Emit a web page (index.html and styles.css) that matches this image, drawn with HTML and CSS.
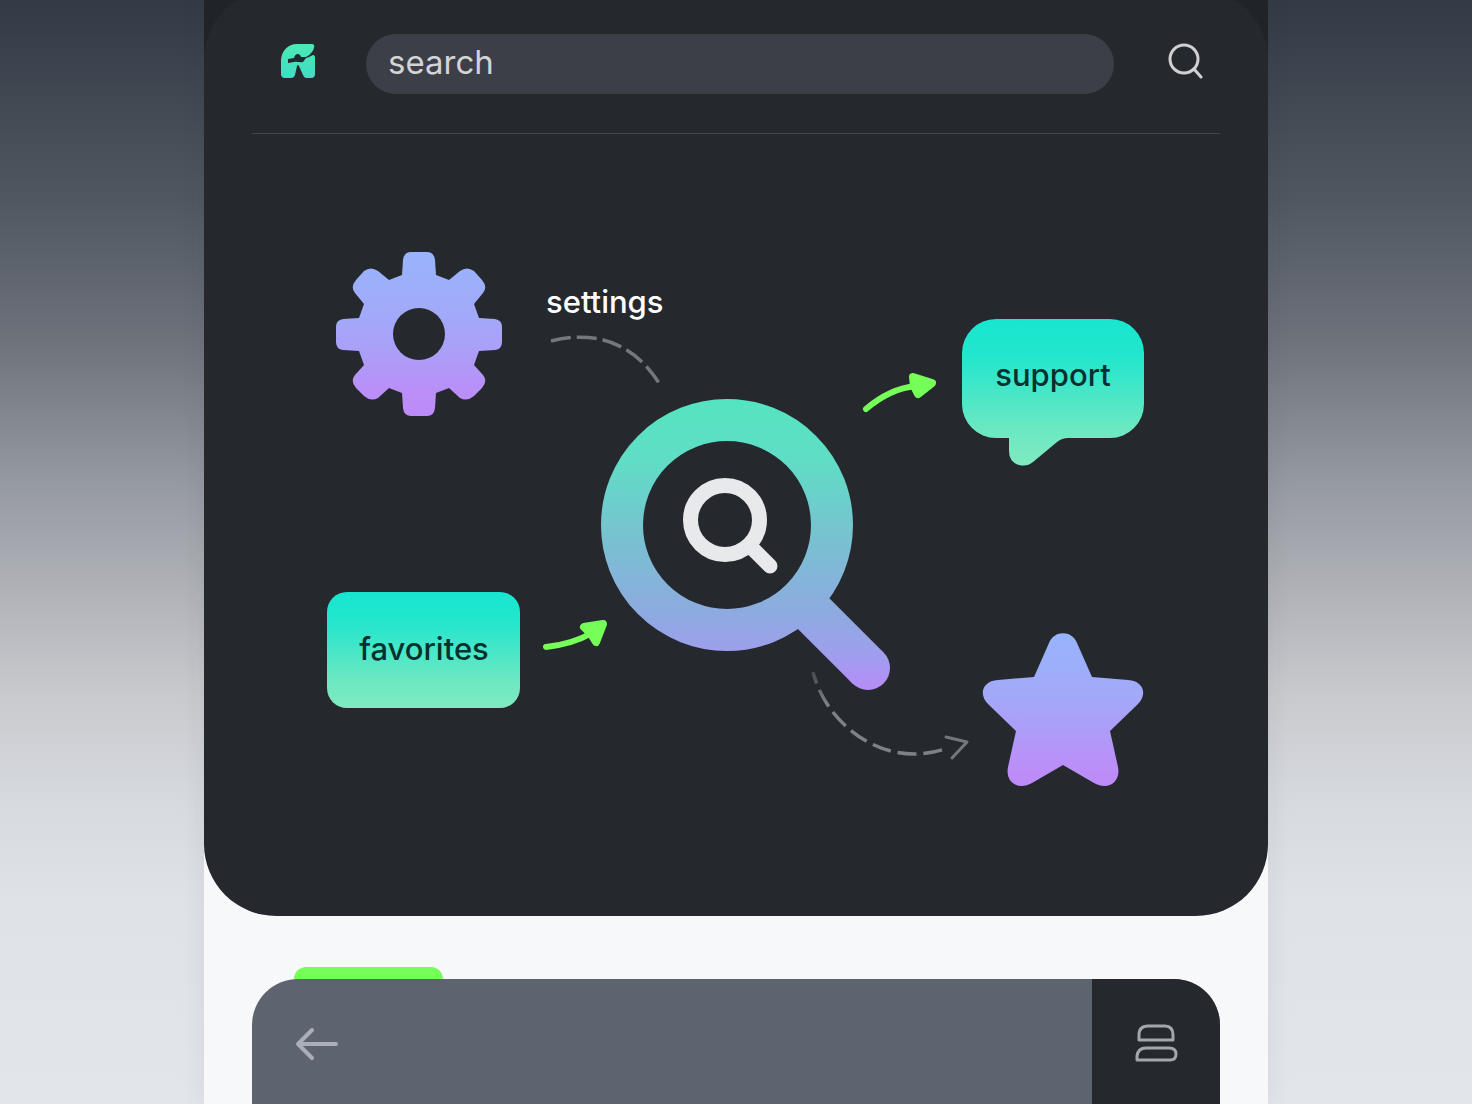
FILE: index.html
```html
<!DOCTYPE html>
<html lang="en">
<head>
    <meta charset="UTF-8">
    <meta name="viewport" content="width=device-width, initial-scale=1.0">
    <title>Search</title>
    <link rel="stylesheet" href="styles.css">
</head>
<body>

<div class="screen">
    <main class="hero">
        <header class="topbar">
            <a class="logo" href="#" aria-label="Home">
                <svg width="36" height="36" viewBox="0 0 36 36">
                    <path fill="url(#logoFill)" d="M1 31V18C1 8 8 1 17 1H32Q35 1 34 5C33 8 32 9 30 11L33 12Q35 12 35 15V31Q35 35 31 35H26Q24 35 23 32L19 23Q18 21 17 23L15 32Q14 35 11 35H5Q1 35 1 31Z"/>
                    <path fill="#22282e" d="M8 16L14 15C15 10 20 10 21 14L26 14L34 9L33 12L29 14L26 15L23 19C20 20 17 18 14 19L8 20Z"/>
                    <defs>
                        <linearGradient id="logoFill" x1="0" y1="0" x2="0" y2="1">
                            <stop offset="0" stop-color="#4de9b4"/>
                            <stop offset="1" stop-color="#3fdcc4"/>
                        </linearGradient>
                    </defs>
                </svg>
            </a>
            <form class="search-form" role="search">
                <input class="search-input" type="text" placeholder="search" aria-label="search">
                <button class="icon-btn search-btn" type="button" aria-label="Submit search">
                    <svg width="36" height="36" viewBox="0 0 36 36" fill="none" stroke="#cfd0d1" stroke-width="3" stroke-linecap="round">
                        <circle cx="16" cy="16" r="14"/>
                        <path d="M26 26L33 34"/>
                    </svg>
                </button>
            </form>
        </header>

        <svg class="diagram" viewBox="0 0 1064 782">
            <defs>
                <linearGradient id="violet" x1="0" y1="0" x2="0" y2="1">
                    <stop offset="0" stop-color="#98b4fb"/>
                    <stop offset="0.4" stop-color="#a2a9f9"/>
                    <stop offset="0.6" stop-color="#ab9ff8"/>
                    <stop offset="0.85" stop-color="#ba8ff8"/>
                    <stop offset="1" stop-color="#be8bf8"/>
                </linearGradient>
                <linearGradient id="mint" x1="0" y1="0" x2="0" y2="1">
                    <stop offset="0" stop-color="#19e6cf"/>
                    <stop offset="0.25" stop-color="#22e6cd"/>
                    <stop offset="0.75" stop-color="#6be8c2"/>
                    <stop offset="1" stop-color="#80eac0"/>
                </linearGradient>
                <linearGradient id="lens" gradientUnits="userSpaceOnUse" x1="0" y1="265" x2="0" y2="556">
                    <stop offset="0" stop-color="#54e4c0"/>
                    <stop offset="0.2" stop-color="#5fdec5"/>
                    <stop offset="0.5" stop-color="#7abfd2"/>
                    <stop offset="0.75" stop-color="#8fa9e1"/>
                    <stop offset="0.88" stop-color="#9f9eee"/>
                    <stop offset="1" stop-color="#b78cf8"/>
                </linearGradient>
                <linearGradient id="trail" gradientUnits="userSpaceOnUse" x1="0" y1="536" x2="0" y2="570">
                    <stop offset="0" stop-color="#44484d"/>
                    <stop offset="1" stop-color="#7c8287"/>
                </linearGradient>
            </defs>

            <!-- settings -->
            <path transform="translate(215 200)" fill="url(#violet)" fill-rule="evenodd" d="M-17-59L-16-74Q-15-82-8-82H8Q15-82 16-74L17-59L30-54L41-63Q48-68 55-63L63-54Q69-47 64-41L55-30L60-16L76-15Q83-14 83-7V8Q83 15 76 16L60 17L55 31L64 41Q69 47 63 54L55 62Q48 68 41 64L30 54L17 59L16 74Q15 82 8 82H-8Q-15 82-16 74L-17 59L-30 54L-41 64Q-48 68-55 62L-63 54Q-69 47-64 41L-55 31L-60 17L-76 16Q-83 15-83 8V-7Q-83-14-76-15L-60-16L-55-30L-64-41Q-69-47-63-54L-55-63Q-48-68-41-63L-30-54ZM-26 0A26 26 0 1 0 26 0A26 26 0 1 0-26 0Z"/>
            <a href="#settings"><text class="label label-light" x="342" y="179">settings</text></a>
            <path class="dashed" stroke="#72787e" d="M347 207C390 196 429 208 455 249"/>

            <!-- support -->
            <a href="#support">
                <path fill="url(#mint)" d="M792 185H906A34 34 0 0 1 940 219V270A34 34 0 0 1 906 304H864Q858 304 853 308L829 328Q823 333 815 331Q805 328 805 317V304H792A34 34 0 0 1 758 270V219A34 34 0 0 1 792 185Z"/>
                <text class="label label-dark" x="849" y="252">support</text>
            </a>
            <g class="arrow">
                <path class="shaft" d="M662 275C676 263 692 254 712 252"/>
                <path class="head" d="M709 243L728 249L714 260L710 252Z"/>
            </g>

            <!-- favorites -->
            <a href="#favorites">
                <rect fill="url(#mint)" x="123" y="458" width="193" height="116" rx="20"/>
                <text class="label label-dark" x="220" y="526">favorites</text>
            </a>
            <g class="arrow">
                <path class="shaft" d="M342 513C360 511 374 507 388 499"/>
                <path class="head" d="M380 493L399 490L392 508L387 500Z"/>
            </g>

            <!-- magnifier -->
            <g fill="none" stroke="url(#lens)">
                <circle cx="523" cy="391" r="105" stroke-width="42"/>
                <path d="M608 478L664 534" stroke-width="44"/>
            </g>
            <circle cx="664" cy="534" r="22" fill="url(#lens)"/>
            <g fill="none" stroke="#e8e9ea" stroke-width="15" stroke-linecap="round">
                <circle cx="521" cy="386" r="34.5"/>
                <path d="M548 414L566 432"/>
            </g>

            <!-- star -->
            <path class="dashed dashed-long" stroke="url(#trail)" d="M609 538C622 590 680 637 744 614"/>
            <path class="dashed-head" d="M742 603L763 608L748 624"/>
            <path transform="translate(859 499)" fill="url(#violet)" d="M-14 10C-9-3 9-3 14 10L29 44L65 47C81 48 85 62 74 72L47 98L55 134C58 149 45 158 31 150L0 132L-31 150C-45 158-58 149-55 134L-47 98L-74 72C-85 62-81 48-65 47L-29 44Z"/>
        </svg>
    </main>

    <section class="panel-wrap">
        <div class="tab"></div>
        <div class="panel">
            <div class="panel-main">
                <button class="icon-btn" type="button" aria-label="Back">
                    <svg width="44" height="38" viewBox="0 0 44 38" fill="none" stroke="#a9aeb8" stroke-width="4" stroke-linecap="round" stroke-linejoin="round">
                        <path d="M42 19H4M18 5L4 19L18 33"/>
                    </svg>
                </button>
            </div>
            <div class="panel-side">
                <button class="icon-btn" type="button" aria-label="Layout">
                    <svg width="44" height="38" viewBox="0 0 44 38" fill="none" stroke="#a3a6aa" stroke-width="3" stroke-linejoin="round">
                        <path d="M5 16V11Q5 2 14 2H31Q39 2 39 11V16Z"/>
                        <path d="M3 36V32Q4 24 12 24H35Q42 24 42 30Q42 36 36 36Z"/>
                    </svg>
                </button>
            </div>
        </div>
    </section>
</div>

</body>
</html>
```

FILE: styles.css
```css
:root {
    --dark: #25292e;
    --darker: #202328;
    --field: #3c3f47;
    --light: #f7f8fa;
    --slate: #5e646f;
    --lime: #76ff58;
}

* {
    margin: 0;
    padding: 0;
    box-sizing: border-box;
    font-family: Inter, "Liberation Sans", sans-serif;
}

body {
    min-height: 100vh;
    background: linear-gradient(#323a45 0%, #505760 18%, #6b7079 30%, #969aa1 44%, #b1b3b9 54%, #c8cace 63%, #d7dadf 73%, #dfe2e7 82%, #e2e5ea 100%);
}

.screen {
    display: flex;
    flex-direction: column;
    max-width: 1064px;
    min-height: 100vh;
    margin: 0 auto;
    overflow: hidden;
    background: linear-gradient(var(--darker) 200px, var(--light) 200px);
    box-shadow: 0 0 24px rgba(40, 50, 70, 0.08);
}

.hero {
    margin-top: -12px;
    padding: 12px 0 0;
    border-radius: 72px;
    background-color: var(--dark);
}

.topbar {
    display: flex;
    align-items: center;
    gap: 50px;
    margin: 0 48px;
    padding: 34px 16px 39px 28px;
    border-bottom: 1px solid #43474c;
}

.logo,
.search-btn {
    display: block;
    padding-bottom: 6px;
}

.logo svg {
    display: block;
}

.search-form {
    display: flex;
    flex: 1;
    align-items: center;
    gap: 54px;
}

.search-input {
    flex: 1;
    min-width: 0;
    height: 60px;
    padding: 0 22px 4px;
    border: none;
    border-radius: 30px;
    background-color: var(--field);
    color: #d3d4d6;
    font-size: 33px;
}

.search-input::placeholder {
    color: #d3d4d6;
    opacity: 1;
}

.icon-btn {
    display: block;
    border: none;
    background: none;
    cursor: pointer;
}

.icon-btn svg {
    display: block;
}

.diagram {
    display: block;
    width: 100%;
}

.label {
    font-size: 31px;
    font-weight: 500;
}

.label-light {
    fill: #ffffff;
}

.label-dark {
    fill: #06302f;
    text-anchor: middle;
}

.dashed {
    fill: none;
    stroke-width: 3.5;
    stroke-dasharray: 20 6;
}

.dashed-long {
    stroke-dasharray: 19 7;
    stroke-dashoffset: 7;
}

.dashed-head {
    fill: none;
    stroke: #72787e;
    stroke-width: 3;
    stroke-linecap: round;
    stroke-linejoin: round;
}

.arrow {
    stroke: var(--lime);
    stroke-linecap: round;
    stroke-linejoin: round;
}

.shaft {
    fill: none;
    stroke-width: 6;
}

.head {
    fill: var(--lime);
    stroke-width: 8;
}

.panel-wrap {
    display: flex;
    flex: 1;
    flex-direction: column;
    padding: 51px 48px 0;
}

.tab {
    width: 149px;
    height: 12px;
    margin-left: 42px;
    border-radius: 12px 12px 0 0;
    background-color: var(--lime);
}

.panel {
    display: flex;
    flex: 1;
    overflow: hidden;
    border-radius: 46px 46px 0 0;
    background-color: var(--slate);
}

.panel-main {
    flex: 1;
    padding: 46px 42px 32px;
}

.panel-side {
    display: flex;
    justify-content: center;
    align-items: flex-start;
    width: 128px;
    padding-top: 45px;
    background-color: var(--dark);
}
```
